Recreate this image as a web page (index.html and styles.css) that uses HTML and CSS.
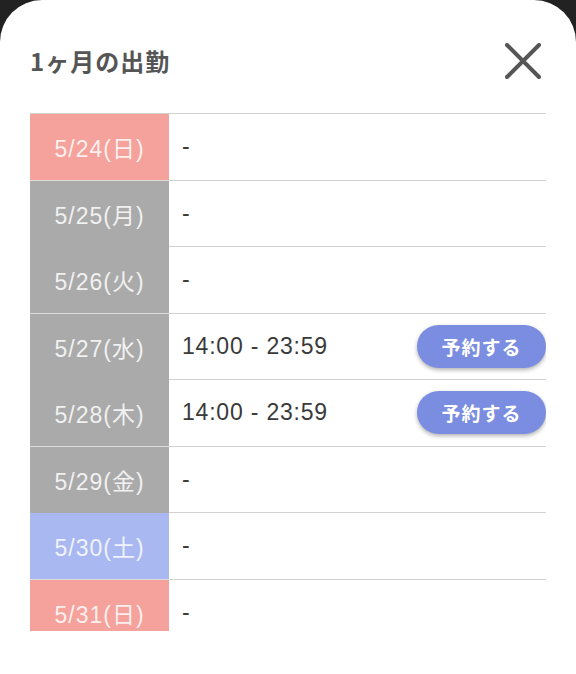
FILE: index.html
```html
<!DOCTYPE html>
<html lang="ja">
<head>
<meta charset="utf-8">
<link rel="stylesheet" href="styles.css">
</head>
<body>
<div class="sheet">
  <div class="header">
    <h1 class="title">1ヶ月の出勤</h1>
    <svg class="close" width="36" height="36" viewBox="0 0 36 36">
      <path d="M2 2 L34 34 M34 2 L2 34" stroke="#555" stroke-width="4" stroke-linecap="round" fill="none"/>
    </svg>
  </div>
  <div class="list">
    <div class="row"><div class="date sun">5/24(日)</div><div class="info">-</div></div>
    <div class="row"><div class="date">5/25(月)</div><div class="info">-</div></div>
    <div class="row"><div class="date">5/26(火)</div><div class="info">-</div></div>
    <div class="row"><div class="date">5/27(水)</div><div class="info"><span>14:00 - 23:59</span><button class="btn">予約する</button></div></div>
    <div class="row"><div class="date">5/28(木)</div><div class="info"><span>14:00 - 23:59</span><button class="btn">予約する</button></div></div>
    <div class="row"><div class="date">5/29(金)</div><div class="info">-</div></div>
    <div class="row"><div class="date sat">5/30(土)</div><div class="info">-</div></div>
    <div class="row"><div class="date sun">5/31(日)</div><div class="info">-</div></div>
  </div>
</div>
</body>
</html>
```
FILE: styles.css
```css
html, body {
  margin: 0;
  padding: 0;
  background: #222;
  height: 674px;
  overflow: hidden;
}
.sheet {
  background: #fff;
  height: 674px;
  border-radius: 42px 42px 0 0;
  padding: 0 30px;
  box-sizing: border-box;
  font-family: "Noto Sans CJK JP", "Noto Sans", sans-serif;
}
.header {
  display: flex;
  align-items: center;
  justify-content: space-between;
  height: 113px;
  padding-top: 8px;
  box-sizing: border-box;
}
.title {
  margin: 0;
  font-size: 24px;
  font-weight: 700;
  color: #555;
  letter-spacing: 1px;
}
.close {
  margin-right: 5px;
}
.list {
  height: 517px;
  overflow: hidden;
  border-top: 1.5px solid #d2d2d2;
}
.row {
  display: flex;
  height: 66.5px;
  box-sizing: border-box;
  border-bottom: 1.5px solid #d2d2d2;
}
.date {
  width: 139px;
  flex: none;
  background: #aaaaaa;
  color: rgba(255, 255, 255, 0.85);
  font-family: "Liberation Sans", "Noto Sans CJK JP", sans-serif;
  font-size: 23px;
  letter-spacing: 1px;
  display: flex;
  align-items: center;
  justify-content: center;
  margin-bottom: -1.5px;
  border-bottom: 1.5px solid #dcdcdc;
}
.date.sun { background: #f4a29b; }
.date.sat { background: #a9b8f1; }
.info {
  flex: 1;
  display: flex;
  align-items: center;
  justify-content: space-between;
  padding-left: 13px;
  font-family: "Liberation Sans", "Noto Sans CJK JP", sans-serif;
  font-size: 23px;
  letter-spacing: 0.8px;
  color: #3a3a3a;
}
.btn {
  border: none;
  background: #7a8de0;
  color: #fff;
  font-family: "Noto Sans CJK JP", sans-serif;
  font-weight: 700;
  font-size: 19px;
  letter-spacing: 1px;
  width: 129px;
  height: 43px;
  border-radius: 22px;
  box-shadow: 0 2px 4px rgba(0, 0, 0, 0.3);
  padding: 0;
}
```
